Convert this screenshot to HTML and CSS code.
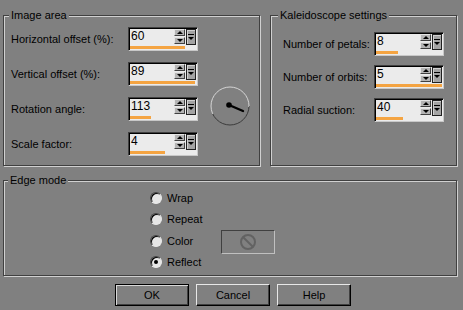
FILE: index.html
```html
<!DOCTYPE html>
<html lang="en">
<head>
    <meta charset="UTF-8">
    <meta name="viewport" content="width=device-width, initial-scale=1.0">
    <title>Kaleidoscope</title>
    <link rel="stylesheet" href="styles.css">
</head>
<body>
    <div class="dialog">
        <div class="top">
            <div class="group image-area">
                <div class="legend">Image area</div>
                <div class="image-body">
                    <div class="fields">
                        <div class="label">Horizontal offset (%):</div>
                        <div class="spin">
                            <div class="spin-row">
                                <span class="value">60</span>
                                <div class="arrows"><span class="arrow up"></span><span class="arrow down"></span></div>
                                <span class="drop"></span>
                            </div>
                            <div class="bar" style="width: 55px"></div>
                        </div>

                        <div class="label">Vertical offset (%):</div>
                        <div class="spin">
                            <div class="spin-row">
                                <span class="value">89</span>
                                <div class="arrows"><span class="arrow up"></span><span class="arrow down"></span></div>
                                <span class="drop"></span>
                            </div>
                            <div class="bar" style="width: 65px"></div>
                        </div>

                        <div class="label">Rotation angle:</div>
                        <div class="spin">
                            <div class="spin-row">
                                <span class="value">113</span>
                                <div class="arrows"><span class="arrow up"></span><span class="arrow down"></span></div>
                                <span class="drop"></span>
                            </div>
                            <div class="bar" style="width: 21px"></div>
                        </div>

                        <div class="label">Scale factor:</div>
                        <div class="spin">
                            <div class="spin-row">
                                <span class="value">4</span>
                                <div class="arrows"><span class="arrow up"></span><span class="arrow down"></span></div>
                                <span class="drop"></span>
                            </div>
                            <div class="bar" style="width: 35px"></div>
                        </div>
                    </div>

                    <svg class="dial" width="40" height="40" viewBox="0 0 40 40">
                        <defs>
                            <linearGradient id="rim" x1="0.35" y1="0" x2="0.55" y2="1">
                                <stop offset="0.62" stop-color="#d4d4d4"/>
                                <stop offset="0.62" stop-color="#3a3a3a"/>
                            </linearGradient>
                        </defs>
                        <circle cx="20" cy="20" r="19" fill="none" stroke="url(#rim)" stroke-width="1"/>
                        <line x1="19" y1="19" x2="33" y2="25" stroke="#000" stroke-width="2.4" stroke-linecap="round"/>
                        <circle cx="19" cy="19" r="2.8" fill="#000"/>
                    </svg>
                </div>
            </div>

            <div class="group kaleido">
                <div class="legend">Kaleidoscope settings</div>
                <div class="fields">
                    <div class="label">Number of petals:</div>
                    <div class="spin">
                        <div class="spin-row">
                            <span class="value">8</span>
                            <div class="arrows"><span class="arrow up"></span><span class="arrow down"></span></div>
                            <span class="drop"></span>
                        </div>
                        <div class="bar" style="width: 22px"></div>
                    </div>

                    <div class="label">Number of orbits:</div>
                    <div class="spin">
                        <div class="spin-row">
                            <span class="value">5</span>
                            <div class="arrows"><span class="arrow up"></span><span class="arrow down"></span></div>
                            <span class="drop"></span>
                        </div>
                        <div class="bar" style="width: 66px"></div>
                    </div>

                    <div class="label">Radial suction:</div>
                    <div class="spin">
                        <div class="spin-row">
                            <span class="value">40</span>
                            <div class="arrows"><span class="arrow up"></span><span class="arrow down"></span></div>
                            <span class="drop"></span>
                        </div>
                        <div class="bar" style="width: 27px"></div>
                    </div>
                </div>
            </div>
        </div>

        <div class="group edge">
            <div class="legend">Edge mode</div>
            <div class="radios">
                <div class="radio-row"><span class="radio"></span><span class="radio-label">Wrap</span></div>
                <div class="radio-row"><span class="radio"></span><span class="radio-label">Repeat</span></div>
                <div class="radio-row">
                    <span class="radio"></span><span class="radio-label">Color</span>
                    <span class="swatch">
                        <svg width="18" height="18" viewBox="0 0 18 18">
                            <circle cx="9" cy="9" r="7" fill="none" stroke="#626262" stroke-width="2"/>
                            <line x1="4.2" y1="4.2" x2="13.8" y2="13.8" stroke="#626262" stroke-width="2"/>
                        </svg>
                    </span>
                </div>
                <div class="radio-row"><span class="radio checked"></span><span class="radio-label">Reflect</span></div>
            </div>
        </div>

        <div class="buttons">
            <button class="btn default">OK</button>
            <button class="btn">Cancel</button>
            <button class="btn">Help</button>
        </div>
    </div>
</body>
</html>
```

FILE: styles.css
```css
body {
    margin: 0;
    width: 463px;
    height: 310px;
    overflow: hidden;
    background-color: #808080;
    font-family: "Liberation Sans", Arial, sans-serif;
    font-size: 11px;
    color: #000;
}

.dialog {
    padding: 15px 0 0 3px;
}

.top {
    display: flex;
    gap: 10px;
}

/* etched group box */
.group {
    box-sizing: border-box;
    border: 1px solid #404040;
    box-shadow: inset 1px 1px 0 #d0d0d0, 1px 1px 0 #d0d0d0;
}

.legend {
    width: fit-content;
    margin: -8px 0 0 5px;
    padding: 0 2px;
    line-height: 14px;
    background-color: #808080;
}

.image-area {
    width: 257px;
    height: 151px;
}

.image-body {
    display: flex;
    align-items: flex-start;
    margin-top: 5px;
    padding-left: 7px;
}

.image-area .fields {
    grid-template-columns: 117px 70px;
    row-gap: 11px;
}

.dial {
    margin: 59px 0 0 12px;
}

.kaleido {
    width: 187px;
    height: 151px;
}

.kaleido .legend {
    margin-left: 7px;
}

.kaleido .fields {
    margin-top: 10px;
    padding-left: 12px;
    grid-template-columns: 91px 70px;
    row-gap: 9px;
}

.fields {
    display: grid;
    align-items: center;
}

.label {
    line-height: 13px;
    padding-top: 1px;
}

/* spin box with slider bar */
.spin {
    box-sizing: border-box;
    width: 70px;
    height: 24px;
    padding: 1px;
    border: 1px solid;
    border-color: #404040 #c8c8c8 #c8c8c8 #404040;
    background-color: #ebebeb;
    box-shadow: inset 1px 1px 0 #000;
    display: flex;
    flex-direction: column;
    gap: 1px;
}

.spin-row {
    display: flex;
    height: 16px;
}

.value {
    flex: 1;
    padding-left: 1px;
    font-size: 12px;
    line-height: 14px;
}

.arrows {
    width: 11px;
    display: flex;
    flex-direction: column;
    gap: 1px;
}

.arrow {
    box-sizing: border-box;
    height: 7px;
    background-color: #b4b4b4;
    border: 1px solid;
    border-color: #e4e4e4 #404040 #404040 #e4e4e4;
    display: flex;
    align-items: center;
    justify-content: center;
}

.arrow::after {
    content: "";
    width: 0;
    height: 0;
    border-left: 3px solid transparent;
    border-right: 3px solid transparent;
}

.arrow.up::after { border-bottom: 3px solid #000; }
.arrow.down::after { border-top: 3px solid #000; }

.drop {
    box-sizing: border-box;
    width: 10px;
    margin-left: 1px;
    border: 1px solid #202020;
    background-color: #a4a4a4;
    box-shadow: inset 1px 1px 0 #d0d0d0;
    display: flex;
    flex-direction: column;
    align-items: center;
    justify-content: center;
    gap: 2px;
}

.drop::before {
    content: "";
    width: 6px;
    height: 1px;
    background-color: #000;
}

.drop::after {
    content: "";
    width: 0;
    height: 0;
    border-left: 3px solid transparent;
    border-right: 3px solid transparent;
    border-top: 3px solid #000;
}

.bar {
    height: 3px;
    background-color: #f4a442;
}

/* edge mode */
.edge {
    width: 454px;
    height: 96px;
    margin-top: 14px;
}

.edge .legend {
    margin-left: 4px;
}

.radios {
    margin-left: 146px;
}

.radio-row {
    display: flex;
    align-items: center;
    gap: 5px;
    height: 21.5px;
}

.radio {
    box-sizing: border-box;
    width: 12px;
    height: 12px;
    border-radius: 50%;
    border: 1px solid;
    border-color: #404040 #e8e8e8 #e8e8e8 #404040;
    background-color: #e6e6e6;
    box-shadow: inset 1px 1px 0 #000;
    display: flex;
    align-items: center;
    justify-content: center;
}

.radio.checked::after {
    content: "";
    width: 4px;
    height: 4px;
    border-radius: 50%;
    background-color: #000;
}

.radio-label {
    width: 49px;
}

.swatch {
    box-sizing: border-box;
    width: 54px;
    height: 24px;
    margin-top: 2px;
    border: 1px solid;
    border-color: #404040 #c0c0c0 #c0c0c0 #404040;
    display: flex;
    align-items: center;
    justify-content: center;
}

/* dialog buttons */
.buttons {
    display: flex;
    gap: 7px;
    margin: 8px 0 0 112px;
}

.btn {
    box-sizing: border-box;
    width: 74px;
    height: 22px;
    padding: 0;
    background-color: #808080;
    font-family: "Liberation Sans", Arial, sans-serif;
    font-size: 11px;
    color: #000;
    border: 1px solid;
    border-color: #e8e8e8 #000 #000 #e8e8e8;
    box-shadow: inset -1px -1px 0 #404040;
}

.btn.default {
    border-color: #000;
    box-shadow: inset 1px 1px 0 #d8d8d8, inset -1px -1px 0 #404040;
}
```
